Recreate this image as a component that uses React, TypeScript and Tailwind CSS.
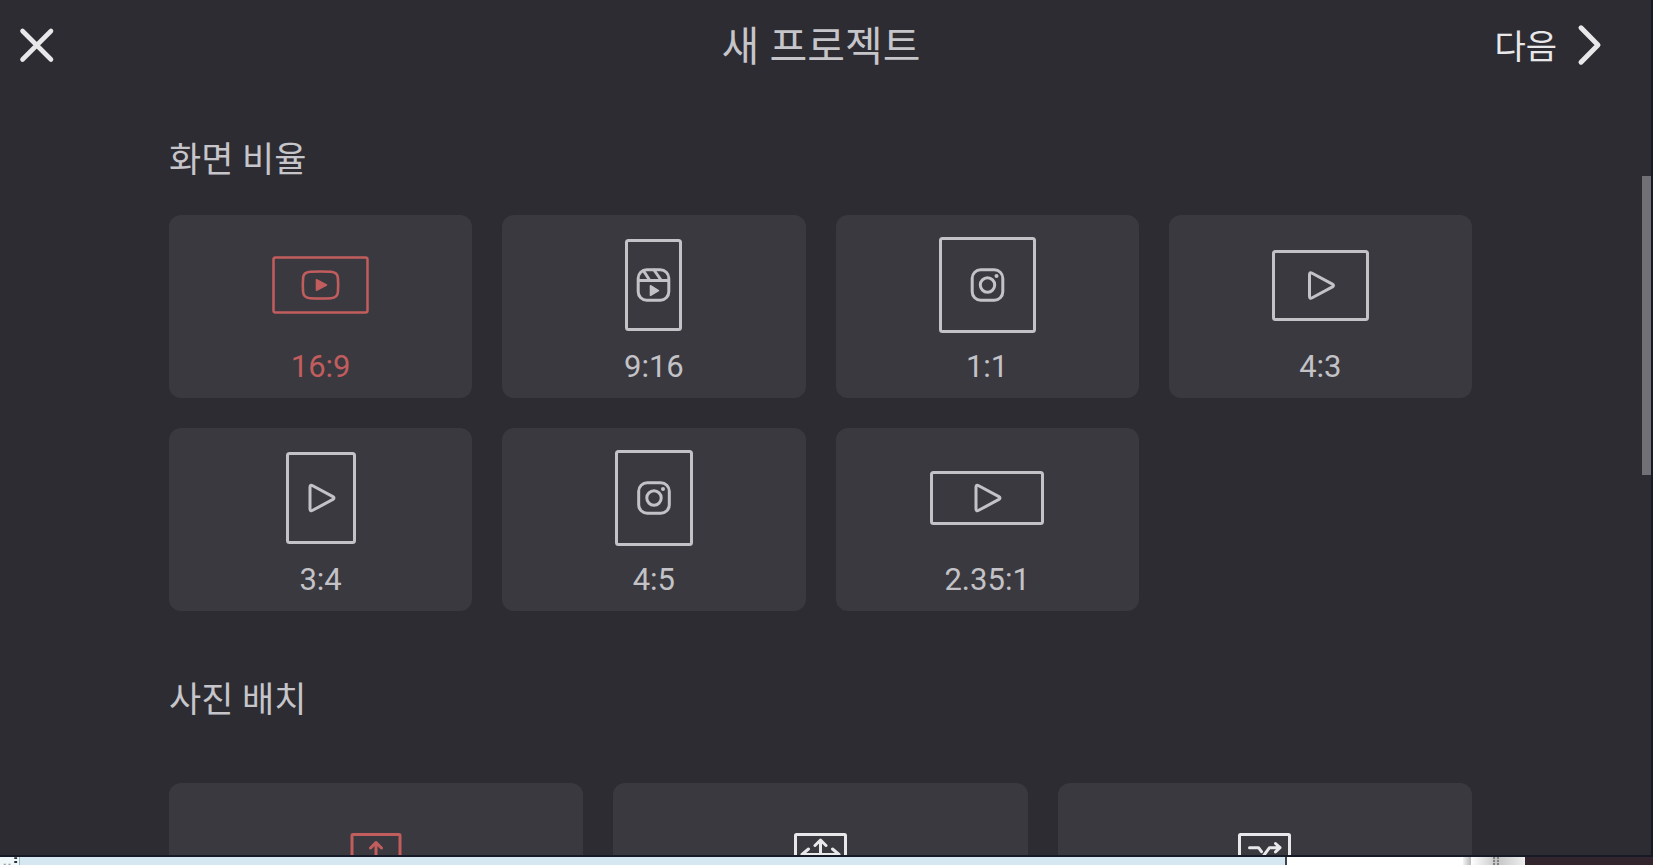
import React from "react";

type Glyph = "youtube" | "reels" | "instagram" | "play";

type Ratio = { label: string; w: number; h: number; glyph: Glyph };

const ratios: Ratio[] = [
  { label: "16:9", w: 97, h: 58, glyph: "youtube" },
  { label: "9:16", w: 57, h: 92, glyph: "reels" },
  { label: "1:1", w: 97, h: 96, glyph: "instagram" },
  { label: "4:3", w: 97, h: 71, glyph: "play" },
  { label: "3:4", w: 70, h: 92, glyph: "play" },
  { label: "4:5", w: 78, h: 96, glyph: "instagram" },
  { label: "2.35:1", w: 114, h: 54, glyph: "play" },
];

function GlyphShape({ glyph }: { glyph: Glyph }) {
  switch (glyph) {
    case "youtube":
      return (
        <>
          <path d="M-10.5 -13.2 Q0 -13.8 10.5 -13.2 Q17 -12.8 17.4 -7 Q18 0 17.4 7 Q17 12.8 10.5 13.2 Q0 13.8 -10.5 13.2 Q-17 12.8 -17.4 7 Q-18 0 -17.4 -7 Q-17 -12.8 -10.5 -13.2Z" strokeWidth="2.6" />
          <path d="M-4 -5.2 L6 0 L-4 5.2Z" fill="currentColor" strokeWidth="1.6" />
        </>
      );
    case "reels":
      return (
        <>
          <rect x="-15.3" y="-15.3" width="30.6" height="30.6" rx="8.5" strokeWidth="3" />
          <path d="M-15 -4.5H15M-9.5 -13.5L-4 -5M0.5 -15L7.5 -5" strokeWidth="3" />
          <path d="M-3 0.8 L5 5.6 L-3 10.4Z" fill="currentColor" strokeWidth="1.6" />
        </>
      );
    case "instagram":
      return (
        <>
          <rect x="-15.3" y="-15.3" width="30.6" height="30.6" rx="8.5" strokeWidth="3" />
          <circle r="7.2" strokeWidth="3" />
          <circle cx="9" cy="-9" r="2" fill="currentColor" stroke="none" />
        </>
      );
    case "play":
      return (
        <path
          d="M-11 -10.8 Q-11 -13.8 -8.3 -12.3 L11.900 -1.4 Q14.1 0 11.900 1.4 L-8.3 12.3 Q-11 13.8 -11 10.8Z"
          strokeWidth="3"
        />
      );
  }
}

function RatioIcon({ w, h, glyph }: { w: number; h: number; glyph: Glyph }) {
  return (
    <svg
      width={w}
      height={h}
      viewBox={`${-w / 2} ${-h / 2} ${w} ${h}`}
      fill="none"
      stroke="currentColor"
      strokeLinecap="round"
      strokeLinejoin="round"
      aria-hidden="true"
    >
      <rect
        x={-w / 2 + 1.5}
        y={-h / 2 + 1.5}
        width={w - 3}
        height={h - 3}
        rx="2"
        strokeWidth={glyph === "youtube" ? 2.5 : 3}
      />
      <GlyphShape glyph={glyph} />
    </svg>
  );
}

const placements = [
  {
    label: "맞추기",
    icon: (
      <>
        <rect x="2" y="1.5" width="48" height="41" rx="1" />
        <path d="M26 34V9.5M20.500 15l5.500-5.500 5.500 5.500" />
      </>
    ),
  },
  {
    label: "채우기",
    icon: (
      <>
        <rect x="1.5" y="1.5" width="50" height="41" rx="1" />
        <path d="M26.500 38V7M21 12.500l5.500-5.500 5.500 5.500M21 32.500l5.500 5.500 5.500-5.500M8 21.500H45M14.500 16L8 21.500l6.500 5.500M38.500 16L45 21.500l-6.500 5.500" />
      </>
    ),
  },
  {
    label: "무작위",
    icon: (
      <>
        <rect x="1.500" y="1.500" width="50" height="41" rx="1" />
        <path d="M11.500 14.700h9l3 4M11.500 29.500h9L31.500 14.700h10M29 26l2.500 3.500h10M37.500 10.500l4.500 4.200-4.500 4.200M37.500 25.300l4.500 4.200-4.500 4.200" />
      </>
    ),
  },
];

const heading = "mb-[30px] text-[35px] leading-[48px] text-[#c6c5ca]";

export default function App() {
  return (
    <div className="flex h-screen flex-col overflow-hidden bg-[#161a26] font-['Roboto','Noto_Sans_CJK_KR',sans-serif]">
      <div className="mr-0.5 mb-0.5 flex min-h-0 flex-1 bg-[#2d2c32]">
        <div className="min-w-0 flex-1 overflow-hidden">
          <header className="grid h-[90px] grid-cols-[1fr_auto_1fr] items-center px-[18px]">
            <button type="button" aria-label="닫기" className="justify-self-start text-[#e8e7ea]">
              <svg width="38" height="38" viewBox="0 0 38 38" fill="none" stroke="currentColor" strokeWidth="4.600" strokeLinecap="round" aria-hidden="true">
                <path d="M4.500 5L33 33.500M33 5L4.500 33.500" />
              </svg>
            </button>
            <h1 className="pt-1 text-[41px] leading-[60px] text-[#c6c5ca]">새 프로젝트</h1>
            <button type="button" className="mr-[22px] flex items-center gap-5 justify-self-end text-[#e8e7ea]">
              <span className="pt-1 text-[34px] leading-[48px]">다음</span>
              <svg width="25" height="42" viewBox="0 0 25 42" fill="none" stroke="currentColor" strokeWidth="5" strokeLinecap="round" strokeLinejoin="round" aria-hidden="true">
                <path d="M4 3.800L21 21L4 38.200" />
              </svg>
            </button>
          </header>

          <main className="pt-[47px] pr-[170px] pl-[169px]">
            <section>
              <h2 className={heading}>화면 비율</h2>
              <div role="radiogroup" aria-label="화면 비율" className="grid grid-cols-4 gap-[30px]">
                {ratios.map((r, i) => (
                  <label
                    key={r.label}
                    className="relative flex h-[183px] cursor-pointer flex-col items-center rounded-xl bg-[#3a393f] text-[#c3c2c7] has-checked:text-[#c25d5e]"
                  >
                    <input type="radio" name="ratio" value={r.label} defaultChecked={i === 0} className="sr-only" />
                    <span className="flex h-[140px] items-center">
                      <RatioIcon w={r.w} h={r.h} glyph={r.glyph} />
                    </span>
                    <span className="text-[31px] leading-6">{r.label}</span>
                  </label>
                ))}
              </div>
            </section>

            <section className="pt-[66px]">
              <h2 className={heading}>사진 배치</h2>
              <div role="radiogroup" aria-label="사진 배치" className="grid grid-cols-3 gap-[30px] pt-7">
                {placements.map((p, i) => (
                  <label
                    key={p.label}
                    className="relative flex h-[183px] cursor-pointer flex-col items-center rounded-xl bg-[#3a393f] pt-[50px] text-[#e8e7ea] has-checked:text-[#c25d5e]"
                  >
                    <input type="radio" name="placement" value={p.label} aria-label={p.label} defaultChecked={i === 0} className="sr-only" />
                    <svg width="53" height="44" viewBox="0 0 53 44" fill="none" stroke="currentColor" strokeWidth="3" strokeLinecap="round" strokeLinejoin="round" aria-hidden="true">
                      {p.icon}
                    </svg>
                  </label>
                ))}
              </div>
            </section>
          </main>
        </div>
        <div className="w-[9px] shrink-0 pt-44">
          <div className="h-[299px] bg-[#717075]" />
        </div>
      </div>

      <div className="flex h-2 shrink-0 bg-[#d5e7f1]" aria-hidden="true">
        <div className="flex w-5 justify-end border-r border-[#9fb6c2] bg-[#eff7f9]">
          <svg width="20" height="8" viewBox="0 0 20 8" fill="#27313a">
            <path d="M15 0h3v2h-3zM15 4h3v2h-3z" />
            <path d="M4 7h2v1H4zM9 7h2v1H9z" opacity=".6" />
          </svg>
        </div>
        <div className="flex-1" />
        <div className="w-0.5 bg-[#3c444c]" />
        <div className="w-44 bg-white" />
        <div className="w-2 bg-linear-to-r from-[#f4f4f4] to-[#b8b8b8]" />
        <div className="w-[22px] bg-linear-to-r from-white to-[#d0d0d0]" />
        <div className="w-1.5 border-x-2 border-dotted border-[#808080] bg-[#c5c5c5]" />
        <div className="w-[26px] bg-linear-to-r from-[#c8c8c8] to-[#efefef]" />
        <div className="w-32 bg-[#33252d]" />
      </div>
    </div>
  );
}
